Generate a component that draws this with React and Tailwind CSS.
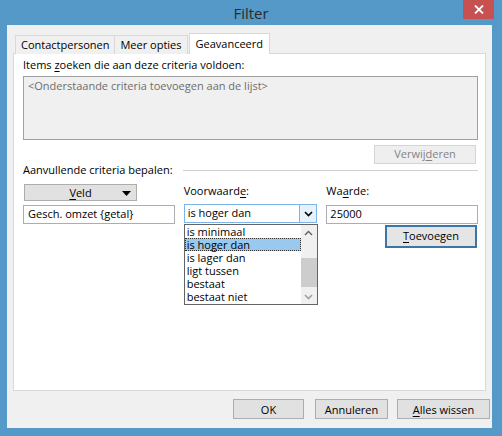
import React from "react";

const btn =
  "flex items-center justify-center border border-[#adadad] bg-[#e1e1e1] text-black text-[11px] leading-none";

function U({ children }) {
  return <span className="underline underline-offset-2 decoration-1">{children}</span>;
}

function ChevronDown({ className = "" }) {
  return (
    <svg width="9" height="6" viewBox="0 0 9 6" className={className}>
      <path d="M1 1 L4.5 4.5 L8 1" fill="none" stroke="currentColor" strokeWidth="1.6" />
    </svg>
  );
}

function ChevronUp({ className = "" }) {
  return (
    <svg width="9" height="6" viewBox="0 0 9 6" className={className}>
      <path d="M1 5 L4.5 1.5 L8 5" fill="none" stroke="currentColor" strokeWidth="1.4" />
    </svg>
  );
}

const options = ["is minimaal", "is hoger dan", "is lager dan", "ligt tussen", "bestaat", "bestaat niet"];

export default function App() {
  return (
    <div className="w-[502px] h-[436px] bg-[#5599c8] flex flex-col font-['Open_Sans',sans-serif] text-[11px] text-black overflow-hidden">
      {/* title bar */}
      <div className="relative h-[25px] shrink-0 flex items-center justify-center">
        <span className="text-[15px] text-[#2b2b2b] leading-none mt-[1px]">Filter</span>
        <div className="absolute right-[8px] top-0 w-[31px] h-[19px] bg-[#c75050] flex items-center justify-center text-white">
          <svg width="10" height="9" viewBox="0 0 10 9">
            <path d="M1 0.5 L9 8.5 M9 0.5 L1 8.5" stroke="white" strokeWidth="1.8" />
          </svg>
        </div>
      </div>

      {/* client area */}
      <div className="ml-[7px] mr-[10px] h-[403px] bg-[#f0f0f0] flex flex-col">
        {/* tabs */}
        <div className="flex items-end h-[28px] pl-[8px] relative z-10">
          <div className="h-[19px] mb-[-1px] px-[5px] flex items-center border border-[#d9d9d9] border-b-0 bg-[#f0f0f0]">
            Contactpersonen
          </div>
          <div className="h-[19px] mb-[-1px] px-[5px] flex items-center border border-[#d9d9d9] border-l-0 border-b-0 bg-[#f0f0f0]">
            Meer opties
          </div>
          <div className="h-[21px] mb-[-1px] ml-[1px] px-[6px] flex items-center border border-[#d9d9d9] border-b-0 bg-white">
            Geavanceerd
          </div>
        </div>

        {/* tab panel */}
        <div className="mx-[6px] h-[338px] bg-white border border-[#d9d9d9] flex flex-col pl-[9px] pr-[7px] pt-[3px]">
          <div className="h-[16px] leading-[16px]">
            Items <U>z</U>oeken die aan deze criteria voldoen:
          </div>
          <div className="mt-[3px] h-[64px] bg-[#f0f0f0] border border-[#a0a0a0] px-[4px] pt-[1px] text-[#6d6d6d] leading-[16px]">
            &lt;Onderstaande criteria toevoegen aan de lijst&gt;
          </div>
          <div className="mt-[5px] self-end mr-[2px] w-[102px] h-[19px] flex items-center justify-center border border-[#d5d5d5] bg-[#efefef] text-[#838383]">
            Verwij<U>d</U>eren
          </div>

          <div className="mt-[-2px] flex items-center h-[16px]">
            <span className="leading-[16px]">Aanvullende criteria bepalen:</span>
            <div className="flex-1 ml-[10px] h-px bg-[#d0d0d0]" />
          </div>

          <div className="mt-[5px] flex gap-[9px]">
            {/* veld */}
            <div className="w-[152px] flex flex-col">
              <div className={`${btn} relative ml-[1px] mt-[1px] w-[113px] h-[17px]`}>
                <U>V</U>eld
                <svg width="9" height="5" viewBox="0 0 9 5" className="absolute right-[5px] top-[6px]">
                  <path d="M0 0 L9 0 L4.5 5 Z" fill="black" />
                </svg>
              </div>
              <div className="mt-[4px] h-[19px] border border-[#abadb3] bg-white flex items-center px-[4px]">
                Gesch. omzet {"{getal}"}
              </div>
            </div>

            {/* voorwaarde */}
            <div className="w-[134px] flex flex-col relative">
              <div className="h-[16px] leading-[16px]">
                Voorwaard<U>e</U>:
              </div>
              <div className="mt-[5px] h-[19px] border border-[#7eb4ea] bg-white flex items-center">
                <span className="flex-1 px-[3px]">is hoger dan</span>
                <div className="w-[17px] h-full bg-[#e5f1fb] border-l border-[#7eb4ea] flex items-center justify-center">
                  <ChevronDown />
                </div>
              </div>
              <div className="absolute left-0 top-[41px] w-[134px] h-[81px] bg-white border border-[#646464] flex z-20">
                <div className="flex-1 flex flex-col">
                  {options.map((o, i) => (
                    <div
                      key={o}
                      className={
                        i === 1
                          ? "h-[13px] leading-[11px] px-[1px] bg-[#99c9ef] border border-dotted border-[#333]"
                          : "h-[13px] leading-[13px] px-[2px]"
                      }
                    >
                      {o}
                    </div>
                  ))}
                </div>
                <div className="w-[16px] bg-[#f0f0f0] flex flex-col items-center text-[#606060]">
                  <div className="h-[16px] flex items-center justify-center">
                    <ChevronUp />
                  </div>
                  <div className="mt-[17px] w-[16px] h-[29px] bg-[#cdcdcd]" />
                  <div className="flex-1" />
                  <div className="h-[14px] flex items-center justify-center">
                    <ChevronDown className="text-[#a0a0a0]" />
                  </div>
                </div>
              </div>
            </div>

            {/* waarde */}
            <div className="w-[152px] flex flex-col">
              <div className="h-[16px] leading-[16px]">
                Wa<U>a</U>rde:
              </div>
              <div className="mt-[6px] h-[19px] border border-[#abadb3] bg-white flex items-center px-[3px]">
                25000
              </div>
              <div className="mt-[1px] self-end mr-[1px] w-[92px] h-[23px] border-2 border-[#3d75a6] bg-[#e5e5e5] flex items-center justify-center">
                <U>T</U>oevoegen
              </div>
            </div>
          </div>
        </div>

        {/* bottom buttons */}
        <div className="mt-[8px] flex justify-end pr-[2px]">
          <div className={`${btn} w-[71px] h-[20px]`}>OK</div>
          <div className={`${btn} ml-[11px] w-[73px] h-[20px]`}>Annuleren</div>
          <div className={`${btn} ml-[9px] w-[93px] h-[20px]`}>
            <U>A</U>lles wissen
          </div>
        </div>
      </div>
    </div>
  );
}
